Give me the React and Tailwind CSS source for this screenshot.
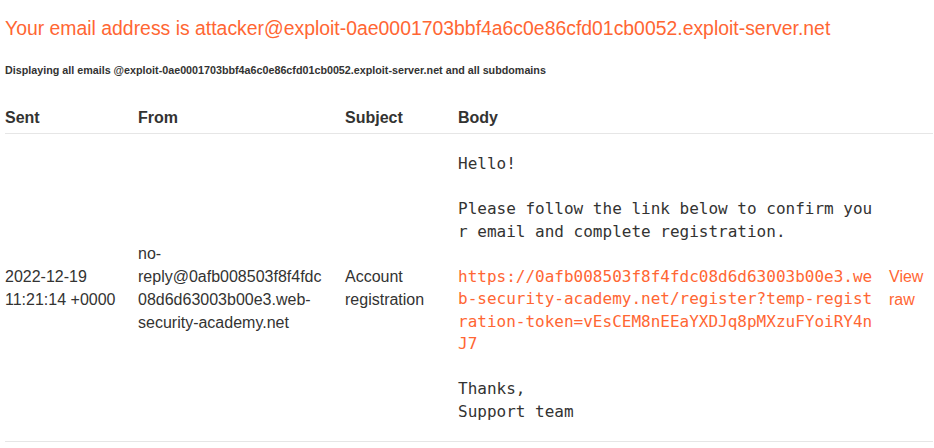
import React from 'react';

const sans = { fontFamily: '"Liberation Sans", Arial, sans-serif' };

const link =
  'https://0afb008503f8f4fdc08d6d63003b00e3.web-security-academy.net/register?temp-registration-token=vEsCEM8nEEaYXDJq8pMXzuFYoiRY4nJ7';

const App = () => {
  return (
    <div className="min-h-screen bg-white text-[#333332] font-['Liberation_Sans',Arial,sans-serif]">
      <div className="pl-[5px]">
        <h1 className="pt-[17px] text-[19.4px] leading-[22px] font-normal text-[#ff6633]">
          Your email address is attacker@exploit-0ae0001703bbf4a6c0e86cfd01cb0052.exploit-server.net
        </h1>
        <h4 className="mt-[25px] text-[10.74px] leading-[13px] font-bold">
          Displaying all emails @exploit-0ae0001703bbf4a6c0e86cfd01cb0052.exploit-server.net and all subdomains
        </h4>
        <table className="mt-[29px] w-[928px] table-fixed border-collapse text-[16px] leading-[23px]">
          <colgroup>
            <col className="w-[133px]" />
            <col className="w-[207px]" />
            <col className="w-[113px]" />
            <col className="w-[431px]" />
            <col />
          </colgroup>
          <thead>
            <tr className="border-b border-[#e6e6e6]">
              <th className="pb-[4px] text-left font-bold">Sent</th>
              <th className="pb-[4px] text-left font-bold">From</th>
              <th className="pb-[4px] text-left font-bold">Subject</th>
              <th className="pb-[4px] text-left font-bold">Body</th>
              <th className="pb-[4px]"></th>
            </tr>
          </thead>
          <tbody>
            <tr className="border-b border-[#e6e6e6]">
              <td className="align-middle">
                2022-12-19
                <br />
                11:21:14 +0000
              </td>
              <td className="align-middle pr-[19px] wrap-break-word">
                no-reply@0afb008503f8f4fdc08d6d63003b00e3.web-security-academy.net
              </td>
              <td className="align-middle pr-[10px]">Account registration</td>
              <td className="align-middle pr-[12px]">
                <pre className="pt-[19px] pb-[18px] whitespace-pre-wrap break-all font-['DejaVu_Sans_Mono',monospace] text-[16px] leading-[22.5px]">
                  {'Hello!\n\nPlease follow the link below to confirm your email and complete registration.\n\n'}
                  <a href="#" className="text-[#ff6633]">{link}</a>
                  {'\n\nThanks,\nSupport team'}
                </pre>
              </td>
              <td className="align-middle">
                <a href="#" className="text-[#ff6633]" style={sans}>
                  View raw
                </a>
              </td>
            </tr>
          </tbody>
        </table>
      </div>
    </div>
  );
};

export default App;
